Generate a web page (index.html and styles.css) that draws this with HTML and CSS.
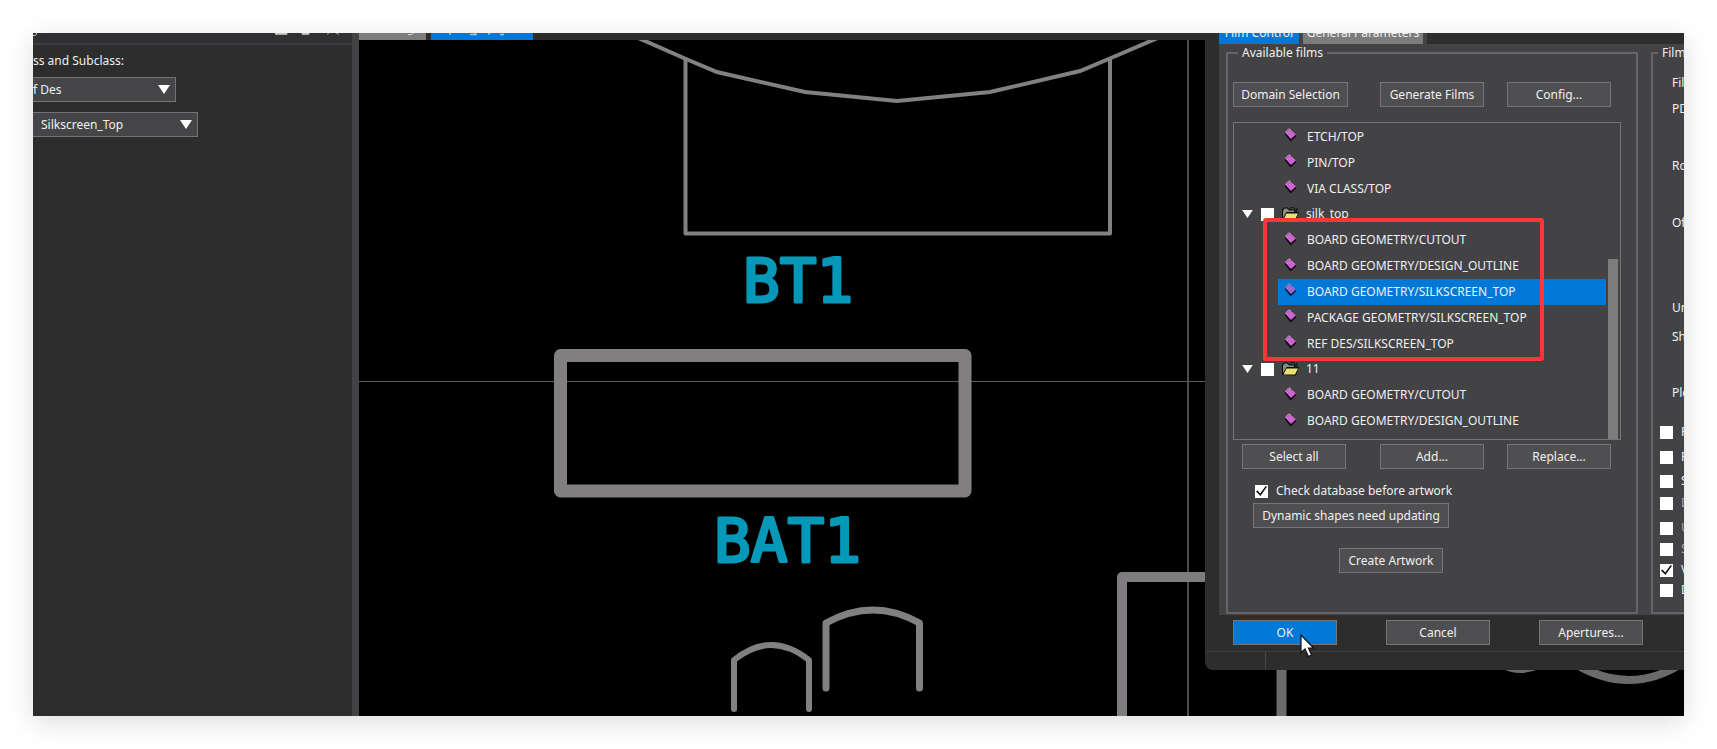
FILE: index.html
```html
<!DOCTYPE html>
<html lang="en">
<head>
<meta charset="utf-8">
<title>Artwork Control Form</title>
<link rel="stylesheet" href="styles.css">
</head>
<body>
<svg class="defs" aria-hidden="true">
  <symbol id="leaf" viewBox="0 0 11 14">
    <path d="M0 6.500 5.500 13.500 11 8.500V6L5 9 0 4z" fill="#120412"/>
    <path d="M4 0.500 11 6.500 6 11 0 4.500z" fill="#c65bcb"/>
    <path d="M4 1 10 6.500M2.500 2.500 8 8M1 4 6.500 9.500" stroke="#e9a0ea" stroke-width="1" stroke-dasharray="1 1"/>
    <path d="M0 4.500 4 0.500 6 2" stroke="#8d8a90" fill="none"/>
  </symbol>
  <symbol id="folder" viewBox="0 0 17 14">
    <path d="M0 13V2.500L2 .500H5.500L7.500 2.500H13V5H17L14 13.500z" fill="#0b0b08"/>
    <path d="M1 11V3.500L2.500 1.500H5L7 3.500H12V5H4.500z" fill="#8c8c86"/>
    <path d="M4.500 6.500H16L13 12.500H1.500z" fill="#e6e372"/>
    <path d="M8 1.500C10 0 12 0 13.500 2.500M15 1V4H12" fill="none" stroke="#0b0b08"/>
  </symbol>
  <symbol id="arrow" viewBox="0 0 12 9"><path d="M0 0H12L6 9z" fill="#fff"/></symbol>
</svg>

<main class="frame">
  <aside class="options">
    <header class="options-head">
      <svg class="head-mark" viewBox="0 0 4 3"><path d="M0 2.500C2 2.500 4 2 4 0" fill="none" stroke="#ddd"/></svg>
      <svg class="head-icons" viewBox="0 0 64 2"><path d="M0 0H12V1.500H0zM27 0H34V1.500H27zM52 1.500 54 0M61 0 64 1.500" fill="#ccc" stroke="#bbb" stroke-width=".8"/></svg>
    </header>
    <div class="options-body">
      <label for="cls">ss and Subclass:</label>
      <div class="combo combo-class">
        <select id="cls"><option>f Des</option></select>
        <svg class="combo-arrow"><use href="#arrow"/></svg>
      </div>
      <div class="combo combo-sub">
        <select aria-label="Silkscreen_Top"><option>Silkscreen_Top</option></select>
        <svg class="combo-arrow"><use href="#arrow"/></svg>
      </div>
    </div>
  </aside>

  <section class="work">
    <div class="work-tabs">
      <span class="work-tab"><svg viewBox="0 0 67 7"><path d="M49 1.500C52 2 54 1.500 54 0" fill="none" stroke="#ddd"/></svg></span>
      <span class="work-tab active"><svg viewBox="0 0 102 7"><path d="M19 0V2M39 1.500H46M44 0V2M57 1.500 59 0M69 1.500H73" fill="none" stroke="#8fd0ff" stroke-width="1.500"/></svg></span>
    </div>
    <svg class="board" viewBox="359 40 1325 676" preserveAspectRatio="xMinYMin slice">
      <g fill="none" stroke="#4b4b4b" stroke-width="2"><path d="M1188 40V716"/><path d="M359 381.500H1206" stroke="#5c5c5c" stroke-width="1"/></g>
      <g fill="none" stroke="#828082" stroke-width="4">
        <path d="M636 37 686 59 717 72 805 92 897 101 990 92 1080 71 1111 58 1160 37"/>
        <path d="M685.500 58V233.500H1110V58" stroke-linejoin="round"/>
      </g>
      <rect x="560.500" y="355.500" width="404.500" height="135.500" fill="none" stroke="#827f81" stroke-width="13" stroke-linejoin="round"/>
      <g fill="none" stroke="#828082" stroke-width="7" stroke-linecap="round" stroke-linejoin="round">
        <path d="M826 688V623Q873 597 919.500 623V688"/>
        <path d="M734 709V660Q771 630 809 660V709" stroke-width="6"/>
      </g>
      <path d="M1122 720V577H1206" fill="none" stroke="#7e7c7e" stroke-width="10" stroke-linejoin="round"/>
      <path d="M1281.500 660V720" stroke="#6c6c6c" stroke-width="10"/>
      <path d="M1572 662Q1630 698 1684 662" fill="none" stroke="#6a6a6a" stroke-width="8"/>
      <path d="M1500 668Q1521 678 1541 668" fill="#6a6a6a"/>
      <g class="refdes"><text x="743" y="302">BT1</text><text x="714" y="562">BAT1</text></g>
    </svg>
  </section>

  <form class="dialog">
    <div class="tabs">
      <button type="button" class="tab tab-film active">Film Control</button>
      <button type="button" class="tab tab-general">General Parameters</button>
      <span class="tabs-rest"></span>
    </div>
    <div class="page">
      <fieldset class="films">
        <legend>Available films</legend>
        <div class="row row-top">
          <button type="button" class="btn btn-domain">Domain Selection</button>
          <button type="button" class="btn">Generate Films</button>
          <button type="button" class="btn">Config...</button>
        </div>
        <div class="tree">
          <ul class="list">
            <li class="leaf"><svg><use href="#leaf"/></svg>ETCH/TOP</li>
            <li class="leaf"><svg><use href="#leaf"/></svg>PIN/TOP</li>
            <li class="leaf"><svg><use href="#leaf"/></svg>VIA CLASS/TOP</li>
            <li class="node"><svg class="exp"><use href="#arrow"/></svg><input type="checkbox" id="n1"><svg class="fold"><use href="#folder"/></svg><label for="n1">silk_top</label></li>
            <li class="leaf"><svg><use href="#leaf"/></svg>BOARD GEOMETRY/CUTOUT</li>
            <li class="leaf"><svg><use href="#leaf"/></svg>BOARD GEOMETRY/DESIGN_OUTLINE</li>
            <li class="leaf selected"><svg><use href="#leaf"/></svg>BOARD GEOMETRY/SILKSCREEN_TOP</li>
            <li class="leaf"><svg><use href="#leaf"/></svg>PACKAGE GEOMETRY/SILKSCREEN_TOP</li>
            <li class="leaf"><svg><use href="#leaf"/></svg>REF DES/SILKSCREEN_TOP</li>
            <li class="node"><svg class="exp"><use href="#arrow"/></svg><input type="checkbox" id="n2"><svg class="fold"><use href="#folder"/></svg><label for="n2">11</label></li>
            <li class="leaf"><svg><use href="#leaf"/></svg>BOARD GEOMETRY/CUTOUT</li>
            <li class="leaf"><svg><use href="#leaf"/></svg>BOARD GEOMETRY/DESIGN_OUTLINE</li>
          </ul>
          <div class="scroll"><span class="thumb"></span></div>
          <div class="highlight"></div>
        </div>
        <div class="row row-edit">
          <button type="button" class="btn btn-select">Select all</button>
          <button type="button" class="btn">Add...</button>
          <button type="button" class="btn">Replace...</button>
        </div>
        <label class="check check-db"><input type="checkbox" checked>Check database before artwork</label>
        <button type="button" class="btn btn-dynamic">Dynamic shapes need updating</button>
        <button type="button" class="btn btn-create">Create Artwork</button>
      </fieldset>
      <fieldset class="film-options">
        <legend>Film</legend>
        <div class="fields">
          <span>Fil</span><span>PD</span><span>Ro</span><span>Of</span><span>Un</span><span>Sh</span><span>Plo</span>
          <label class="check"><input type="checkbox">F</label>
          <label class="check"><input type="checkbox">F</label>
          <label class="check"><input type="checkbox">S</label>
          <label class="check dim"><input type="checkbox">D</label>
          <label class="check dim"><input type="checkbox">U</label>
          <label class="check dim"><input type="checkbox">S</label>
          <label class="check"><input type="checkbox" checked>V</label>
          <label class="check"><input type="checkbox">D</label>
        </div>
      </fieldset>
    </div>
    <div class="actions">
      <button type="button" class="btn primary">OK</button>
      <button type="button" class="btn">Cancel</button>
      <button type="button" class="btn">Apertures...</button>
    </div>
    <div class="status"><span class="status-cell"></span></div>
    <svg class="pointer" viewBox="0 0 15 24"><path d="M1 1V18.500L5 15 8.500 22.500 11.500 21 8.500 14H13.500z" fill="#fff" stroke="#111" stroke-width="1.200"/></svg>
  </form>
</main>
</body>
</html>
```
FILE: styles.css
```css
* { box-sizing: border-box; }

body {
  margin: 0;
  padding: 33px;
  min-height: 100vh;
  display: flex;
  background: #fff;
  color: #f0f0f0;
  font: 12px/16px "Noto Sans", "Open Sans", sans-serif;
}

button, select, input { font: inherit; color: inherit; margin: 0; }
.defs { position: absolute; width: 0; height: 0; }

.frame {
  position: relative;
  flex: 1;
  min-width: 0;
  display: flex;
  overflow: hidden;
  background: #2d2d2d;
}
body::before {
  content: "";
  position: absolute;
  inset: 33px;
  box-shadow: 0 6px 26px rgba(0, 0, 0, .14);
}

/* options panel */
.options {
  flex: 0 0 326px;
  display: flex;
  flex-direction: column;
  border-right: 7px solid #434345;
}
.options-head {
  height: 12px;
  display: flex;
  justify-content: space-between;
  align-items: flex-start;
  padding-right: 13px;
  background: #302f31;
  border-bottom: 2px solid #3d3b3f;
}
.head-mark { width: 4px; height: 3px; }
.head-icons { width: 64px; height: 2px; }
.options-body {
  display: flex;
  flex-direction: column;
  align-items: flex-start;
  padding-top: 8px;
}
.combo { display: grid; align-items: center; }
.combo > * { grid-area: 1 / 1; }
.combo-class { width: 143px; margin-top: 8px; }
.combo-sub { width: 165px; margin-top: 10px; }
.combo select {
  width: 100%;
  height: 25px;
  padding: 1px 0 0;
  appearance: none;
  border: 1px solid #737375;
  border-left: 0;
  border-radius: 0;
  background: #454547;
}
.combo-sub select { padding-left: 8px; }
.combo-arrow {
  width: 12px;
  height: 9px;
  margin-right: 6px;
  justify-self: end;
  pointer-events: none;
}

/* board area */
.work { flex: 1; min-width: 0; display: flex; flex-direction: column; background: #000; }
.work-tabs { flex: 0 0 7px; display: flex; gap: 5px; background: #2d2d2d; }
.work-tab { width: 67px; height: 7px; background: #7c7c7c; }
.work-tab.active { width: 102px; background: #0078d7; }
.work-tab svg { display: block; width: 100%; height: 100%; }
.board { flex: 1; min-height: 0; width: 100%; display: block; }
.refdes {
  font: 61px "DejaVu Sans Mono", monospace;
  fill: #0698b9;
  stroke: #0698b9;
  stroke-width: 3px;
  stroke-linejoin: round;
}

/* artwork dialog */
.dialog {
  position: absolute;
  top: 0;
  right: 0;
  width: 479px;
  display: flex;
  flex-direction: column;
  background: #2d2d2d;
  border-bottom-left-radius: 8px;
  overflow: hidden;
}
.tabs {
  height: 11px;
  display: flex;
  gap: 4px;
  padding-left: 14px;
  background: linear-gradient(90deg, #2d2d2d 14px, #434345 14px);
}
.tab {
  display: flex;
  align-items: flex-end;
  justify-content: center;
  border: 0;
  padding: 0 0 3px;
  overflow: hidden;
  white-space: nowrap;
  background: #7c7c7c;
}
.tab-film { width: 80px; }
.tab-general { width: 120px; }
.tab.active { background: #0078d7; }
.tabs-rest { flex: 1; background: #2d2d2d; }

.page {
  display: flex;
  gap: 13px;
  margin-left: 14px;
  padding: 1px 0 1px 7px;
  height: 571px;
  background: #434345;
  overflow: hidden;
}
fieldset {
  margin: 0;
  padding: 0;
  min-width: 0;
  border: 2px solid #656567;
}
legend { height: 16px; margin-left: 5px; padding: 0 4px; }
.films { flex: 0 0 412px; padding: 21px 15px 0 5px; }
.film-options { flex: 1; border-right: 0; padding-top: 14px; }
.film-options legend { white-space: nowrap; }

.row { display: flex; gap: 23px; }
.btn {
  width: 104px;
  height: 25px;
  padding: 0;
  border: 1px solid #757577;
  background: #4f4f51;
  white-space: nowrap;
}
.btn-domain { width: 115px; margin-right: 9px; }
.btn-select { margin-right: 11px; }
.row-edit { margin: 4px 0 14px; padding-left: 9px; }
.btn-dynamic { display: block; width: 196px; margin: 4px 0 20px 20px; }
.btn-create { display: block; margin-left: 106px; }

.tree {
  position: relative;
  display: flex;
  width: 388px;
  height: 318px;
  margin-top: 15px;
  border: 1px solid #757577;
}
.list {
  flex: 1;
  display: flex;
  flex-direction: column;
  margin: 0;
  padding: 1px 0 5px;
  list-style: none;
}
.leaf, .node { flex: 1; display: flex; align-items: center; white-space: nowrap; }
.leaf { gap: 11px; margin-left: 44px; padding-left: 7px; }
.leaf svg { width: 11px; height: 14px; margin-bottom: 3px; }
.selected { background: #0078d7; }
.selected svg { opacity: .75; }
.node { padding-left: 8px; }
.exp { width: 11px; height: 8px; margin-right: 8px; }
.fold { width: 17px; height: 14px; margin: 0 7px 0 8px; }
.scroll { width: 12px; margin-left: 2px; display: flex; align-items: flex-end; }
.thumb { width: 10px; height: 57%; background: #7c7c7c; }
.highlight {
  position: absolute;
  left: 29px;
  top: 95px;
  width: 281px;
  height: 143px;
  border: 4px solid #ff3636;
  border-radius: 3px;
}

input[type="checkbox"] {
  appearance: none;
  flex: 0 0 13px;
  height: 13px;
  display: grid;
  place-items: center;
  background: #fff;
}
input[type="checkbox"]:checked::before {
  content: "";
  width: 11px;
  height: 10px;
  background: #111;
  clip-path: polygon(0 55%, 14% 45%, 38% 75%, 88% 0, 100% 8%, 40% 100%);
}
.check { display: flex; align-items: center; gap: 8px; height: 16px; white-space: nowrap; }
.check-db { padding-left: 22px; }
.dim { color: #a8a8aa; }

.fields {
  display: grid;
  grid-template-rows: 26px 57px 57px 85px 29px 56px 39px 25px 24px 22px 25px 21px 21px 20px 16px;
  padding-left: 7px;
}
.fields > span { padding-left: 12px; }

.actions { display: flex; gap: 49px; padding: 5px 0 6px 28px; }
.actions .btn { flex: 0 0 104px; }
.primary { background: #0078d7; }
.status { height: 19px; border-top: 1px solid #3f3f41; }
.status-cell { display: block; width: 61px; height: 17px; border-right: 1px solid #4a4a4c; }

.pointer { position: absolute; left: 95px; bottom: 12px; width: 15px; height: 24px; }
```
